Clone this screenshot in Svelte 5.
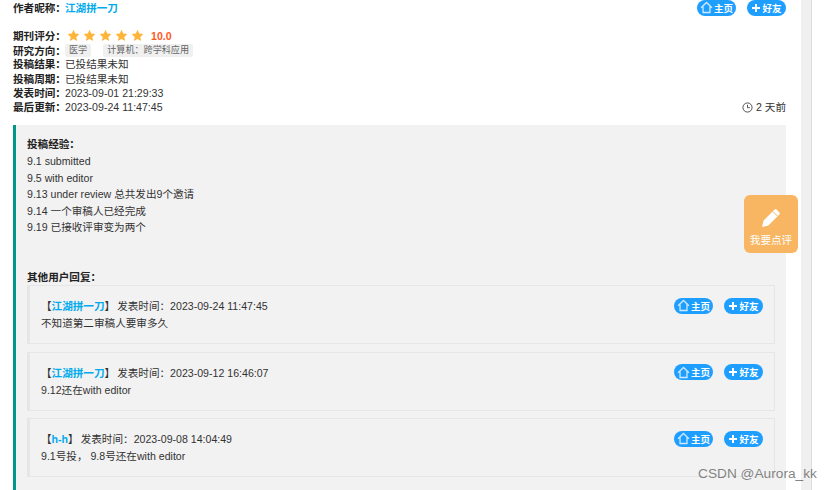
<script>
    let dirs = ["医学", "计算机：跨学科应用"];
    let meta = [
        ["投稿结果：", "已投结果未知"],
        ["投稿周期：", "已投结果未知"],
        ["发表时间：", "2023-09-01 21:29:33"],
    ];
    let lines = [
        "9.1 submitted",
        "9.5 with editor",
        "9.13 under review 总共发出9个邀请",
        "9.14 一个审稿人已经完成",
        "9.19 已接收评审变为两个",
    ];
    let replies = [
        { name: "江湖拼一刀", time: "2023-09-24 11:47:45", text: "不知道第二审稿人要审多久" },
        { name: "江湖拼一刀", time: "2023-09-12 16:46:07", text: "9.12还在with editor" },
        { name: "h-h", time: "2023-09-08 14:04:49", text: "9.1号投， 9.8号还在with editor" },
    ];
</script>

{#snippet buttons()}
    <div class="btns">
        <span class="pill">
            <svg width="13" height="13" viewBox="0 0 12 12"><path d="M1 6.200 6 1.400l5 4.800M2.800 5v5.600h6.400V5" fill="none" stroke="#cfe9ff" stroke-width="1.200" /></svg>
            主页
        </span>
        <span class="pill">
            <svg width="10" height="10" viewBox="0 0 10 10"><path d="M5 1v8M1 5h8" stroke="#fff" stroke-width="2" /></svg>
            好友
        </span>
    </div>
{/snippet}

<div class="layout">
    <main>
        <div class="author">
            <b class="label">作者昵称：</b><a href="#top" class="link name">江湖拼一刀</a>
            {@render buttons()}
        </div>

        <div class="score">
            <b class="label">期刊评分：</b>
            <span class="stars">
                {#each [0, 1, 2, 3, 4] as i (i)}
                    <svg width="13" height="13" viewBox="0 0 24 24"><path d="M12 1.500l3.200 7 7.600.9-5.600 5.200 1.500 7.600L12 18.400l-6.700 3.800 1.500-7.600L1.200 9.400l7.600-.9z" fill="#ffb53c" /></svg>
                {/each}
            </span>
            <span class="num">10.0</span>
        </div>

        <div class="row dirs">
            <b class="label">研究方向：</b>
            {#each dirs as d}
                <span class="tag">{d}</span>
            {/each}
        </div>
        {#each meta as m}
            <div class="row"><b class="label">{m[0]}</b>{m[1]}</div>
        {/each}
        <div class="row last">
            <span class="pair"><b class="label">最后更新：</b>2023-09-24 11:47:45</span>
            <span class="ago">
                <svg width="11" height="11" viewBox="0 0 12 12"><circle cx="6" cy="6" r="5" fill="none" stroke="#444" /><path d="M6 3v3.200h2.600" fill="none" stroke="#444" /></svg>
                2 天前
            </span>
        </div>

        <section class="quote">
            <b class="head">投稿经验：</b>
            <div class="lines">
                {#each lines as l}
                    <div class="line">{l}</div>
                {/each}
            </div>

            <b class="head other">其他用户回复：</b>
            {#each replies as r}
                <div class="card">
                    <div class="top">
                        <span class="who"><span class="br">【</span><a href="#top" class="link">{r.name}</a><span class="br">】</span>发表时间：{r.time}</span>
                        {@render buttons()}
                    </div>
                    <div class="text">{r.text}</div>
                </div>
            {/each}
        </section>
    </main>
    <div class="scrollbar"></div>
</div>

<div class="fab">
    <svg width="22" height="22" viewBox="0 0 22 22"><path d="M2 20l1.600-6.400L14.600 2.600a1.400 1.400 0 0 1 2 0l2.800 2.800a1.400 1.400 0 0 1 0 2L8.400 18.400z" fill="#fff" /><path d="M12.800 4.400l4.800 4.800" stroke="#f8b662" stroke-width="1" /></svg>
    <span>我要点评</span>
</div>

<div class="mark">CSDN @Aurora_kk</div>

<style>
    :global(body) {
        margin: 0;
        background: #fff;
        overflow: hidden;
    }
    .layout {
        display: flex;
        height: 490px;
        overflow: hidden;
        font-family: "Liberation Sans", "Noto Sans CJK SC", sans-serif;
        font-size: 10.6px;
        color: #333;
    }
    main {
        width: 773px;
        padding: 0 15px 0 13px;
        flex: none;
    }
    b {
        color: #222;
    }
    .label {
        display: inline-block;
        width: 52px;
        flex: none;
        white-space: nowrap;
    }
    .link {
        color: #01aaed;
        text-decoration: none;
        font-weight: 700;
    }
    .author {
        display: flex;
        align-items: center;
        height: 15px;
    }
    .btns {
        display: flex;
        gap: 11px;
        margin-left: auto;
    }
    .pill {
        display: flex;
        align-items: center;
        justify-content: center;
        gap: 1px;
        width: 39px;
        height: 16px;
        border-radius: 8px;
        background: #1e9fff;
        color: #fff;
        font-size: 9.5px;
        font-weight: 700;
    }
    .score {
        display: flex;
        align-items: center;
        height: 15px;
        margin-top: 13px;
    }
    .stars {
        display: flex;
        gap: 3px;
        margin: 0 7px 0 2px;
    }
    .num {
        color: #ff5722;
        font-weight: 700;
    }
    .row {
        display: flex;
        align-items: center;
        height: 14.3px;
        line-height: 14.3px;
    }
    .dirs {
        padding-top: 1px;
        height: 13.3px;
    }
    .pair {
        display: flex;
    }
    .tag {
        background: #f0f0f0;
        color: #666;
        font-size: 9.1px;
        height: 13px;
        line-height: 13px;
        padding: 0 4px;
        border-radius: 2px;
        margin-right: 12px;
    }
    .last {
        justify-content: space-between;
    }
    .ago {
        display: flex;
        align-items: center;
        gap: 3px;
    }
    .quote {
        margin-top: 11px;
        height: 365px;
        border-left: 3px solid #009688;
        background: #f2f2f2;
        padding: 12px 11px 0 11px;
        box-sizing: border-box;
    }
    .head {
        display: block;
        height: 15px;
        line-height: 15px;
    }
    .lines {
        padding-top: 1px;
    }
    .line {
        height: 16.5px;
        line-height: 16.5px;
    }
    .other {
        margin-top: 34px;
        margin-bottom: 0.4px;
    }
    .card {
        height: 59px;
        box-sizing: border-box;
        border: 1px solid #e6e6e6;
        border-left-width: 3px;
        padding: 11.4px 11px 0 11px;
        margin-bottom: 7.5px;
    }
    .top {
        display: flex;
        align-items: center;
        height: 16px;
    }
    .who {
        display: flex;
        align-items: center;
        white-space: nowrap;
    }
    .br {
        display: inline-block;
        width: 10.6px;
    }
    .br:last-of-type {
        margin-right: 2px;
    }
    .text {
        height: 18px;
        line-height: 18px;
        padding-top: 0.6px;
    }
    .scrollbar {
        width: 10px;
        height: 490px;
        background: #f0f0f0;
        border-right: 1px solid #ddd;
        flex: none;
    }
    .fab {
        position: absolute;
        left: 744px;
        top: 195px;
        width: 54px;
        height: 58px;
        border-radius: 6px;
        background: #f8b662;
        color: #fff;
        display: flex;
        flex-direction: column;
        align-items: center;
        justify-content: flex-end;
        gap: 3px;
        padding-bottom: 6px;
        box-sizing: border-box;
        font-family: "Liberation Sans", "Noto Sans CJK SC", sans-serif;
        font-size: 10.6px;
    }
    .mark {
        position: absolute;
        left: 698px;
        top: 466px;
        color: rgba(90, 90, 90, 0.75);
        font-family: "Liberation Sans", sans-serif;
        font-size: 13.7px;
        line-height: 16px;
    }
</style>
